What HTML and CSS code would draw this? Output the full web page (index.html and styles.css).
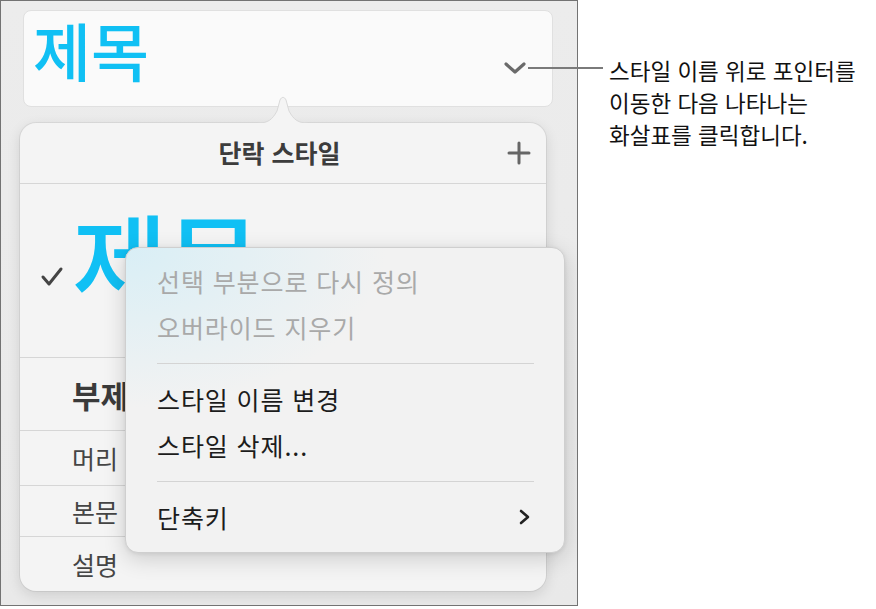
FILE: index.html
```html
<!DOCTYPE html>
<html lang="ko">
<head>
<meta charset="utf-8">
<link rel="stylesheet" href="styles.css">
</head>
<body>
<div class="stage">
  <div class="frame">
    <div class="title-card">
      <span class="title-text">제목</span>
      <svg class="chev-down" width="22" height="12" viewBox="0 0 22 12"><polyline points="2,2 11,10 20,2" fill="none" stroke="#6a6a6a" stroke-width="3.2" stroke-linecap="round" stroke-linejoin="round"/></svg>
    </div>
    <div class="popover">
      <svg class="pop-arrow" width="50" height="28" viewBox="0 0 50 28"><path d="M0,27 C10,27 14,24 19,15 L22,4 C23.5,0.5 26.5,0.5 28,4 L31,15 C36,24 40,27 50,27" fill="#f4f4f4" stroke="#d9d9d9" stroke-width="1"/><rect x="0" y="27" width="50" height="2" fill="#f4f4f4"/></svg>
      <div class="pop-header">
        <span></span>
        <span class="pop-title">단락 스타일</span>
        <svg class="plus" width="24" height="24" viewBox="0 0 24 24"><path d="M12 2 V22 M2 12 H22" stroke="#666" stroke-width="3" stroke-linecap="round"/></svg>
      </div>
      <div class="row row-title">
        <svg class="check" width="24" height="22" viewBox="0 0 24 22"><polyline points="3,11 9,18 21,3" fill="none" stroke="#444" stroke-width="3" stroke-linecap="round" stroke-linejoin="round"/></svg>
        <span class="big-title">제목</span>
      </div>
      <div class="row row-sub">부제</div>
      <div class="row row-head">머리</div>
      <div class="row row-body">본문</div>
      <div class="row row-cap">설명</div>
    </div>
    <div class="menu">
      <div class="item disabled">선택 부분으로 다시 정의</div>
      <div class="item disabled">오버라이드 지우기</div>
      <div class="sep"></div>
      <div class="item">스타일 이름 변경</div>
      <div class="item">스타일 삭제...</div>
      <div class="sep"></div>
      <div class="item item-sub"><span>단축키</span><svg width="12" height="16" viewBox="0 0 12 16"><polyline points="2,2 9,8 2,14" fill="none" stroke="#222" stroke-width="2.6" stroke-linecap="round" stroke-linejoin="round"/></svg></div>
    </div>
  </div>
  <div class="callout-line"></div>
  <div class="annotation">
    <p>스타일 이름 위로 포인터를</p>
    <p>이동한 다음 나타나는</p>
    <p>화살표를 클릭합니다.</p>
  </div>
</div>
</body>
</html>
```

FILE: styles.css
```css
* { box-sizing: border-box; }
html, body { margin: 0; padding: 0; background: #ffffff; }
body {
  font-family: "Noto Sans CJK KR", "Noto Sans", sans-serif;
  width: 876px;
  height: 609px;
  overflow: hidden;
}
.stage {
  position: relative;
  display: flex;
  align-items: flex-start;
}
.frame {
  position: relative;
  width: 578px;
  height: 606px;
  border: 1px solid #737373;
  background: linear-gradient(180deg, #ececec 0%, #e9e9e9 100%);
  display: flex;
  flex-direction: column;
  overflow: hidden;
}
.title-card {
  margin: 9px 0 0 22px;
  width: 530px;
  height: 97px;
  border: 1px solid #e0e0e0;
  border-radius: 8px;
  background: #fafafa;
  display: flex;
  justify-content: space-between;
  padding: 0 26px 0 9px;
  flex-shrink: 0;
}
.title-text {
  color: #10c0f4;
  font-size: 63px;
  font-weight: 500;
  line-height: 63px;
  margin-top: 6px;
}
.chev-down {
  margin-top: 51px;
}
.popover {
  position: relative;
  margin: 16px 0 0 19px;
  width: 526px;
  height: 468px;
  border-radius: 16px;
  background: #f4f4f4;
  box-shadow: 0 0 0 1px rgba(0,0,0,0.06), 0 4px 14px rgba(0,0,0,0.12);
  display: flex;
  flex-direction: column;
  flex-shrink: 0;
}
.pop-arrow {
  position: absolute;
  left: 238px;
  top: -27px;
}
.pop-header {
  height: 62px;
  display: grid;
  grid-template-columns: 1fr auto 1fr;
  align-items: center;
  border-bottom: 1px solid #d6d6d6;
  padding-right: 15px;
}
.pop-title {
  font-size: 25px;
  font-weight: 700;
  color: #3c3c3c;
  line-height: 30px;
  margin-top: -2px;
  margin-left: 8px;
}
.plus {
  justify-self: end;
}
.row {
  display: flex;
  align-items: center;
  padding-left: 52px;
  border-bottom: 1px solid #d6d6d6;
  color: #454545;
  font-size: 25px;
  flex-shrink: 0;
  overflow: hidden;
  white-space: nowrap;
}
.row-title {
  height: 174px;
  padding-left: 20px;
  align-items: flex-start;
}
.check {
  margin-right: 8px;
  margin-top: 82px;
}
.big-title {
  color: #10c0f4;
  font-size: 104px;
  font-weight: 500;
  line-height: 104px;
  margin-top: 22px;
  letter-spacing: -2px;
}
.row-sub {
  height: 73px;
  font-size: 31px;
  font-weight: 700;
  color: #3a3a3a;
}
.row-head { height: 55px; }
.row-body { height: 51px; }
.row-cap { height: 54px; border-bottom: none; }
.menu {
  position: absolute;
  left: 124px;
  top: 246px;
  width: 440px;
  height: 306px;
  border-radius: 13px;
  border: 1px solid #cfcfcf;
  background:
    radial-gradient(ellipse 260px 160px at 0% 0%, rgba(214,238,246,0.9), rgba(214,238,246,0) 100%),
    #f2f2f2;
  box-shadow: 0 6px 22px rgba(0,0,0,0.16), 0 1px 4px rgba(0,0,0,0.08);
  padding: 10px 0 15px;
}
.item {
  height: 46px;
  line-height: 46px;
  padding-left: 31px;
  font-size: 25px;
  letter-spacing: 0.9px;
  color: #1c1c1c;
}
.item.disabled { color: #a9a9a9; }
.item-sub {
  display: flex;
  justify-content: space-between;
  align-items: center;
  padding-right: 33px;
}
.sep {
  height: 1px;
  background: #d4d4d4;
  margin: 13px 30px 12px 31px;
}
.callout-line {
  position: absolute;
  left: 528px;
  top: 67px;
  width: 75px;
  height: 2px;
  background: #7a7a7a;
}
.annotation {
  margin: 54px 0 0 31px;
  font-size: 22.5px;
  line-height: 32px;
  color: #111;
}
.annotation p { margin: 0; }
```
